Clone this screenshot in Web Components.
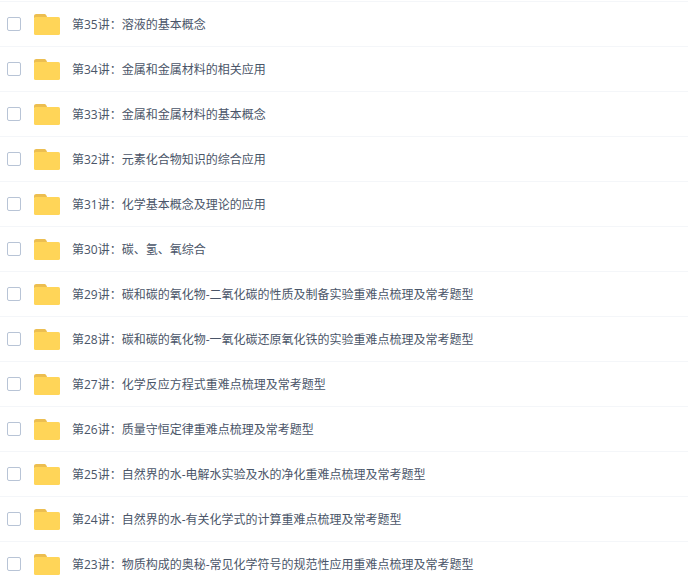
<!DOCTYPE html>
<html lang="zh">
<head>
<meta charset="utf-8">
<title>课程目录</title>
<style>
    html, body {
        margin: 0;
        padding: 0;
        background: #fff;
        overflow: hidden;
    }

    body {
        height: 581px;
    }
</style>
</head>
<body>
<file-list>
    <file-row>第35讲：溶液的基本概念</file-row>
    <file-row>第34讲：金属和金属材料的相关应用</file-row>
    <file-row>第33讲：金属和金属材料的基本概念</file-row>
    <file-row>第32讲：元素化合物知识的综合应用</file-row>
    <file-row>第31讲：化学基本概念及理论的应用</file-row>
    <file-row>第30讲：碳、氢、氧综合</file-row>
    <file-row>第29讲：碳和碳的氧化物-二氧化碳的性质及制备实验重难点梳理及常考题型</file-row>
    <file-row>第28讲：碳和碳的氧化物-一氧化碳还原氧化铁的实验重难点梳理及常考题型</file-row>
    <file-row>第27讲：化学反应方程式重难点梳理及常考题型</file-row>
    <file-row>第26讲：质量守恒定律重难点梳理及常考题型</file-row>
    <file-row>第25讲：自然界的水-电解水实验及水的净化重难点梳理及常考题型</file-row>
    <file-row>第24讲：自然界的水-有关化学式的计算重难点梳理及常考题型</file-row>
    <file-row>第23讲：物质构成的奥秘-常见化学符号的规范性应用重难点梳理及常考题型</file-row>
</file-list>

<script>
class FileList extends HTMLElement {
    constructor() {
        super();
        const shadow = this.attachShadow({ mode: "open" });
        shadow.innerHTML = `
            <style>
                :host {
                    display: block;
                    margin-top: 1px;
                    border-top: 1px solid #f4f6f9;
                    font-family: "Open Sans", "Noto Sans CJK SC", sans-serif;
                    font-size: 12px;
                    color: #4a5568;
                }
            </style>
            <slot></slot>
        `;
    }
}

class FileRow extends HTMLElement {
    constructor() {
        super();
        const shadow = this.attachShadow({ mode: "open" });
        shadow.innerHTML = `
            <style>
                :host {
                    display: flex;
                    align-items: center;
                    box-sizing: border-box;
                    height: 45px;
                    padding-left: 7px;
                    border-bottom: 1px solid #f4f6f9;
                }

                .check {
                    box-sizing: border-box;
                    width: 14px;
                    height: 14px;
                    margin-right: 12px;
                    background: #fff;
                    border: 1px solid #b8c4d6;
                    border-radius: 2px;
                }

                svg {
                    display: block;
                    width: 28px;
                    height: 22px;
                    margin-right: 11px;
                }

                .name {
                    padding-top: 2px;
                    line-height: 18px;
                    white-space: nowrap;
                }
            </style>
            <div class="check"></div>
            <svg viewBox="0 0 28 22">
                <path d="M1 3C1 1.9 2 1 3.2 1h7.6c1.2 0 2 .5 2.6 1.4L14.6 5H1z" fill="#ecbe50"/>
                <rect x="1" y="4" width="26" height="18" rx="1.6" fill="#ffd558"/>
            </svg>
            <div class="name"><slot></slot></div>
        `;
    }
}

customElements.define("file-list", FileList);
customElements.define("file-row", FileRow);
</script>
</body>
</html>
